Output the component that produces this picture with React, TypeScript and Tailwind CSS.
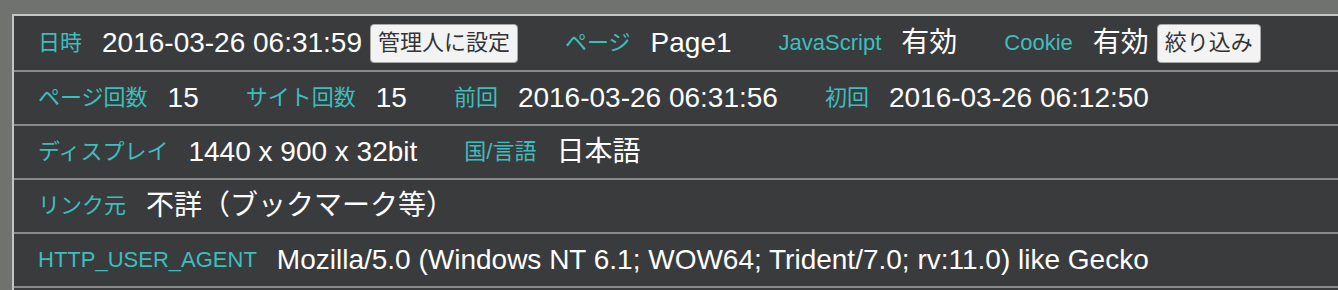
import React from 'react';

type Item = { label: string; value: string; button?: string };

const rows: { items: Item[]; tall?: boolean }[] = [
  {
    tall: true,
    items: [
      { label: '日時', value: '2016-03-26 06:31:59', button: '管理人に設定' },
      { label: 'ページ', value: 'Page1' },
      { label: 'JavaScript', value: '有効' },
      { label: 'Cookie', value: '有効', button: '絞り込み' },
    ],
  },
  {
    items: [
      { label: 'ページ回数', value: '15' },
      { label: 'サイト回数', value: '15' },
      { label: '前回', value: '2016-03-26 06:31:56' },
      { label: '初回', value: '2016-03-26 06:12:50' },
    ],
  },
  {
    items: [
      { label: 'ディスプレイ', value: '1440 x 900 x 32bit' },
      { label: '国/言語', value: '日本語' },
    ],
  },
  {
    items: [{ label: 'リンク元', value: '不詳（ブックマーク等）' }],
  },
  {
    items: [
      {
        label: 'HTTP_USER_AGENT',
        value: 'Mozilla/5.0 (Windows NT 6.1; WOW64; Trident/7.0; rv:11.0) like Gecko',
      },
    ],
  },
];

const App: React.FC = () => {
  return (
    <div
      className="h-[290px] w-full overflow-hidden bg-[#707270] pt-[14px] pl-[12px]"
      style={{ fontFamily: "'Liberation Sans', 'Noto Sans CJK JP', sans-serif" }}
    >
      <div className="h-[300px] border-l-2 border-t-2 border-[#c4c4c4] bg-[#3a3b3d]">
        {rows.map((row, i) => (
          <div
            key={i}
            className={`flex items-center gap-[47px] border-b-2 border-[#8a8a8a] pl-[24px] ${row.tall ? 'h-[56px]' : 'h-[54px]'}`}
          >
            {row.items.map((item) => (
              <div key={item.label} className="flex items-center whitespace-nowrap">
                <span className="text-[22px] leading-none text-[#3dbebe]">{item.label}</span>
                <span className="ml-[20px] text-[28px] leading-none text-white">{item.value}</span>
                {item.button && (
                  <button className="ml-[8px] h-[39px] rounded-[4px] border border-[#a8a8a8] bg-[#f3f3f3] px-[7px] text-[22px] leading-none text-[#333]">
                    {item.button}
                  </button>
                )}
              </div>
            ))}
          </div>
        ))}
      </div>
    </div>
  );
};

export default App;
